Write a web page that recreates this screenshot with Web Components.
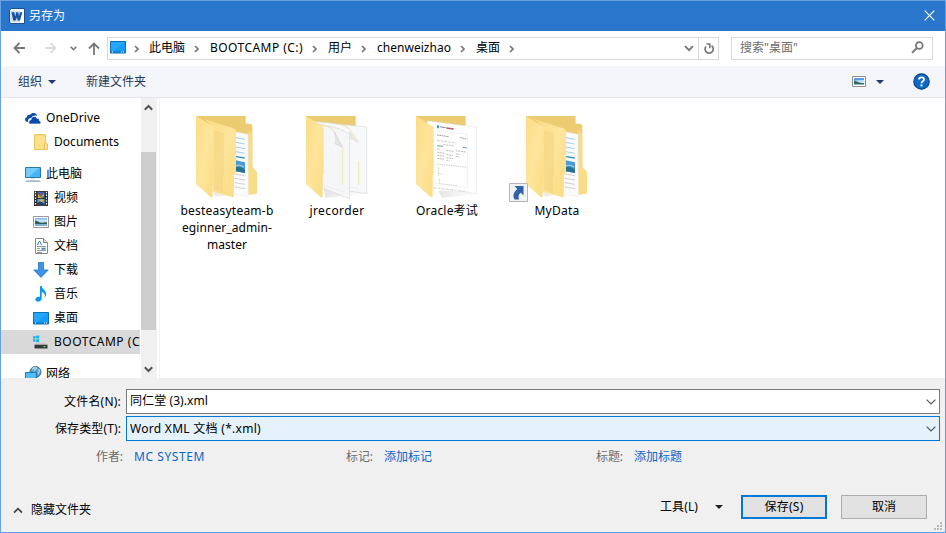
<!DOCTYPE html>
<html lang="zh-CN">
<head>
<meta charset="utf-8">
<title>另存为</title>
<style>
html,body{margin:0;height:100%;overflow:hidden}
body{font:12px/16px "Noto Sans","Noto Sans CJK SC",sans-serif;color:#000}
</style>
</head>
<body>
<save-dialog></save-dialog>
<script>
const ICONS = {
word:[16,16,`<path d="M.5 2 2.5.5h13v15H2L.5 14z" fill="#f2f7fd" stroke="#1d4e94"/><path d="M1.500 3h11v11h-11z" fill="#c5ddf4"/><path d="M11 2.500h3.500v12H11z" fill="#fff"/><path d="M2.500 4.300h2.800l.8 4.200 1.300-4.200h1.900l.7 4.200 1-4.200h2.300L11 12.500H8.700L8 9l-1.300 3.500H4.300z" fill="#174f9c"/>`],
close:[11,11,`<path d="M.7.7 10.3 10.3M10.3.7.7 10.3" stroke="#fff" stroke-width="1.2" fill="none"/>`],
back:[13,12,`<path d="M6.500 1 1.500 6l5 5M1.500 6H12" stroke="#777" stroke-width="1.8" fill="none"/>`],
forward:[13,12,`<path d="M6.500 1 11.500 6l-5 5M11.500 6H1" stroke="#dcdcdc" stroke-width="1.8" fill="none"/>`],
mini:[7,5,`<path d="M.7.8 3.500 3.600 6.300.8" stroke="#777" stroke-width="1.600" fill="none"/>`],
up:[12,13,`<path d="M1 6.500 6 1.500l5 5M6 2v11" stroke="#777" stroke-width="1.8" fill="none"/>`],
chev:[5,8,`<path d="M1 1l3 3-3 3" stroke="#777" stroke-width="1.700" fill="none"/>`],
down:[10,7,`<path d="M1 1.200 5 5.200 9 1.200" stroke="#777" stroke-width="1.9" fill="none"/>`],
combo:[10,6,`<path d="M.6.6 5 4.900 9.400.6" stroke="#555" stroke-width="1.2" fill="none"/>`],
refresh:[12,13,`<path d="M8.600 3.700A4.100 4.100 0 1 1 2.900 4.500" stroke="#777" stroke-width="1.700" fill="none"/><path d="M3.500 2h3.300v4.300" stroke="#777" stroke-width="1.600" fill="none"/>`],
search:[13,13,`<circle cx="8.300" cy="4.500" r="3.400" stroke="#777" stroke-width="1.800" fill="none"/><path d="M5.700 7.200 1 11.900" stroke="#777" stroke-width="2"/>`],
tri:[8,4,`<path d="M0 0h8L4 4z" fill="#1e3a66"/>`],
trib:[8,4,`<path d="M0 0h8L4 4z" fill="#222"/>`],
view:[14,11,`<path d="M.5.5h13v10H.5z" fill="#fff" stroke="#8c8c8c"/><path d="M2 2h10v3H2z" fill="#5b9ce8"/><path d="M2 4.500l10-.5v2H2z" fill="#bfe0f5"/><path d="M2 4.500c3 1 6 2.500 10 2.500v1H2z" fill="#2d6a62"/><path d="M2 8h10v1H2z" fill="#8bb8c8"/>`],
help:[17,17,`<circle cx="8.500" cy="8.500" r="7.700" fill="#0d6ac8" stroke="#0b4686" stroke-width="1.200"/><path d="M6 6.600C6 3.600 11 3.600 11 6.500c0 1.800-2.500 1.700-2.500 3.700" fill="none" stroke="#fff" stroke-width="1.900"/><path d="M7.500 11.400h2v2h-2z" fill="#fff"/>`],
screen:[16,13,`<path d="M.5.500h15v11.500H.5z" fill="#159cf7" stroke="#0b6fb5"/><path d="M1 1h14L4 10H1z" fill="#27a5fb"/><path d="M1 10.500h14v1H1z" fill="#0b74c0"/><path d="M2 10.500h1v1H2zM11 10.500h1v1h-1zM13 10.500h1v1h-1z" fill="#fff"/>`],
cloud:[16,11,`<path d="M3 9C-.8 8.700-.6 4.500 2 4.300 2 2 4 1.500 5 2 7-.8 11.500-.5 12 3 9.500 1.800 7 3 6.500 5 4 4.600 2.500 7 3 9z" fill="#0b4bab"/><path d="M5.500 11C3 11 3.200 7 6 6.800 6 3 11 2.200 12.200 5.500c2-.3 2.400 1 2.200 2.300C16.500 8 16.300 11 14.500 11z" fill="#0b4bab" stroke="#fff" stroke-width=".7"/>`],
minifolder:[14,16,`<path d="M.5.500h11v8.500l1.500 1.500v5H.5z" fill="#fde08a" stroke="#e9c465"/><path d="M10.500 15V10l1.500-1.500 1.500 1.500v5.500h-3z" fill="#fbe59c" stroke="#e3b94e" stroke-width=".8"/>`],
pc:[16,15,`<path d="M.5.500h15v10H.5z" fill="#43b5f7" stroke="#2c77a5"/><path d="M1 1h13L4 10H1z" fill="#74cbfb"/><path d="M6 11h4v1.500H6z" fill="#dfe6eb"/><path d="M1.500 13.300h13L16 15H0z" fill="#a9bccb"/>`],
video:[14,15,`<path d="M0 0h14v15H0z" fill="#303030"/><path d="M3.500.8h7v6.400h-7z" fill="#3562b8"/><path d="M3.500 8h7v6.200h-7z" fill="#5ba3ef"/><path d="M4 3l3 3 3-4v3L7 7H4z" fill="#d8a928"/><path d="M6 2h2v2H6z" fill="#d0402b"/><path d="M3.500 12l3-2 4 3v1.200h-7z" fill="#253f61"/><path d="M6 8.500h3v2H6z" fill="#e0b83b"/><path d="M1.500.8v14M12.500.8v14" stroke="#fff" stroke-width="1.200" stroke-dasharray="1.400 1.400"/>`],
picture:[16,12,`<path d="M.5.500h15v11H.5z" fill="#fff" stroke="#999"/><path d="M2 2h12v8H2z" fill="#c2e3fa"/><path d="M2 2h12v1.500H2z" fill="#84bbee"/><path d="M2 4.500c2 0 3 1 5 2 3 .500 5-.5 7 0V8H2z" fill="#2f5d58"/><path d="M2 8h12v2H2z" fill="#7cb2cd"/>`],
doc:[13,16,`<path d="M.5.500h8l4 4v11H.5z" fill="#fff" stroke="#888"/><path d="M8.500.5v4h4" fill="#ddd" stroke="#888"/><path d="M2.500 7 4 3.500h1L6.500 7" stroke="#347bc5" fill="none"/><path d="M2 8.500h9M2 12.500h9" stroke="#8a9aaa"/><path d="M2 10.500h3M2 14.500h5" stroke="#999"/><path d="M6.500 9.700h4v2h-4z" fill="#4688bd"/>`],
download:[16,16,`<path d="M5.500.500h5v7.500h4.700L8 15.400.8 8h4.700z" fill="#3d94e6" stroke="#2874ba" stroke-width=".8"/>`],
music:[12,16,`<path d="M5 0h1.700c.4 3.500 4.800 4.500 4.500 8.500-.1 1.500-1 2.500-1.700 3.200C10.500 8.500 9.500 7 6.700 6v6.800C6.500 15 4 16 2 15.500.5 15-.3 13 1 11.800 2.200 10.700 4 10.500 5 11z" fill="#0b98f2"/>`],
drive:[16,14,`<path d="M0 1.300l2.500-.3v2.500H0zM3.200.8 6.200.4v3.100h-3zM0 4.200h2.500v2.600L0 6.500zM3.200 4.200h3V7.300l-3-.4z" fill="#12b3e8"/><path d="M3.500 7.800h9l2 2H1.500z" fill="#c7c9ca"/><path d="M1.500 9.700h13v3.800h-13z" fill="#37393b"/><path d="M10.500 11h2v1.200h-2z" fill="#4de35a"/>`],
network:[17,16,`<circle cx="10.500" cy="6" r="5.500" fill="#579dc7" stroke="#39718f"/><path d="M7 3.500c1.500-2 3.500-2 4.500-1.300L9 5M13.500 3l1 2-1.500 3" fill="none" stroke="#a9d2e8" stroke-width="1.500"/><path d="M.5 6.500h11l-.5 8H.5z" fill="#54bdf5" stroke="#1b77b8"/>`],
sbup:[9,7,`<path d="M.8 5.700 4.500 2l3.700 3.700" stroke="#555" stroke-width="2" fill="none"/>`],
sbdn:[9,7,`<path d="M.8 1.300 4.500 5l3.700-3.700" stroke="#555" stroke-width="2" fill="none"/>`],
hide:[10,7,`<path d="M1 5.700 5 1.700l4 4" stroke="#444" stroke-width="1.800" fill="none"/>`],
shortcut:[19,19,`<path d="M.5.500h18v18H.5z" fill="#f1f2f4" stroke="#b4b4b4"/><path d="M5.500 3H14.500v9.500L11.800 9.800C9.300 11.500 9.300 13.500 10 16.500H5.500C3.500 12.500 4.500 9.500 8.300 6z" fill="#2f62a8"/>`],
grip:[9,9,`<path d="M6 0h2v2H6zM3 3h2v2H3zM6 3h2v2H6zM0 6h2v2H0zM3 6h2v2H3zM6 6h2v2H6z" fill="#b9b9b9"/>`]
};
/* Large folder drawings share one 240 x 270 coordinate space. */
const DEFS = `<defs><linearGradient id="f" x1="0" y1="0" x2="1" y2="1"><stop offset="0" stop-color="#fadc82"/><stop offset=".5" stop-color="#fee59c"/><stop offset="1" stop-color="#fadb80"/></linearGradient><linearGradient id="b" x2="0" y2="1"><stop stop-color="#ebca70"/><stop offset="1" stop-color="#f8dd8b"/></linearGradient><linearGradient id="s"><stop stop-color="#bbb" stop-opacity=".4"/><stop offset="1" stop-color="#ddd" stop-opacity="0"/></linearGradient></defs>`;
const BACK = `<path d="M78 33H224Q227 33 227 37V240H80z" fill="url(#b)"/>`;
const FRONT = `<path d="M78 33L128 64Q131 67 131 71V206L128 213V274Q126 279 121 275L81 240Q78 238 78 234z" fill="url(#f)"/>`;
const INNER = BACK+`<path d="M160 48L242 57Q247 58 247 63V186L261 202V261Q261 266 257 266L190 266z" fill="url(#b)"/><path d="M236 75L247 90V186L261 202V261Q261 266 257 266L236 270z" fill="#f9dc88"/><path d="M130 262l60 0-5 12h-50z" fill="url(#s)"/><path d="M195 80L235 88V275L190 268z" fill="#fafafa" stroke="#e2e2e2"/><g stroke="#4aa6d4" stroke-width="2"><path d="M198 98l26 5M198 112l26 5M198 126l26 5M198 140l26 5" opacity=".75"/><path d="M198 155l26 4" stroke="#2a93d0" stroke-width="4"/></g><path d="M197 166l28 6v32l-28-5z" fill="#4b9bd6"/><path d="M197 186q14-4 28 7v11l-28-5z" fill="#2b6f93"/><path d="M197 183q13-7 25 3" stroke="#a7d4e8" stroke-width="3" fill="none"/><path d="M194 207l31 5M194 220l31 5M194 233l31 5M194 246l31 5" stroke="#bbb" stroke-width="2"/><path d="M104 43L193 71Q198 73 198 78V203L191 211V272Q191 278 186 276L128 260V65z" fill="url(#f)"/><path d="M131 76l31 8v125l-3 7v48l-28-9z" fill="#ebcb70" opacity=".32"/>`+FRONT;
const FOLDERS = {
nested:INNER,
pages:BACK+`<path d="M130 250l100 0 52 10-25 8-120 10z" fill="url(#s)"/><path d="M84 47L260 66V266L140 248z" fill="#f7f8fa" stroke="#cfcfcf" stroke-width="1.500"/><path d="M168 57q34 2 43 20l24 32" fill="none" stroke="#f0dba2" stroke-width="2.500"/><path d="M208 80q5 14 1 20 14 3 24 13z" fill="#e7e8ea" stroke="#c5c5c5"/><path d="M100 52l80 20 29 16v194l-81-33z" fill="#f5f6f8" stroke="#cfcfcf" stroke-width="1.500"/><path d="M112 58q42 5 50 22l25 46" fill="none" stroke="#f0dba2" stroke-width="2.500"/><path d="M164 82q5 20 1 35 14 3 23 12z" fill="#e4e5e8" stroke="#c5c5c5"/><path d="M188 130v109M236 168v72" stroke="#f5dc9c" stroke-width="2"/><path d="M130 242l60 18M207 247l30 3" stroke="#ccc" stroke-dasharray="7 3"/>`+FRONT,
exam:BACK+`<path d="M145 257l135 2-20 9-105 10z" fill="url(#s)"/><path d="M112 47L260 67V266L112 244z" fill="#fff" stroke="#dadada" stroke-width="1.500"/><path d="M141 61h6v9h-6z" fill="#3aa1c5"/><path d="M149 65l18 3" stroke="#888" stroke-width="3"/><path d="M169 69l22 3" stroke="#c45757" stroke-width="4"/><path d="M141 90l36 5M210 98l22 4" stroke="#888" stroke-width="2.500" stroke-dasharray="5 2"/><path d="M141 107l31 3M175 111l24 3" stroke="#999" stroke-width="1.500" stroke-dasharray="8 3"/><path d="M141 122l18 2M218 127l12 2" stroke="#55a4c2" stroke-width="3"/><path d="M160 119l30 3M142 132l8 1M142 142l22 3M142 151l24 3M142 160l20 3M169 136l24 3M169 149l20 3M169 158l20 3M169 165l10 3M197 137l30 4M197 146l12 2M197 154l10 2" stroke="#999" stroke-width="2" stroke-dasharray="6 2"/><path d="M141 177l91 10M145 188v25M148 222v14l52 6M145 206l14 2" fill="none" stroke="#999" stroke-width="1.500" stroke-dasharray="4 3"/><path d="M139 77l93 11v160l-97-14" fill="none" stroke="#e3e3e3" stroke-width="1.500"/><path d="M130 249l65 7M205 257l28 3" stroke="#999" stroke-dasharray="8 5"/>`+FRONT
};
function define(name, html, css, init) {
  customElements.define(name, class extends HTMLElement {
    constructor() { super(); this.attachShadow({mode:'open'}); }
    connectedCallback() {
      if (this.shadowRoot.childNodes.length) return;
      this.shadowRoot.innerHTML = `<style>*{box-sizing:border-box}${css}</style>` + (typeof html === 'function' ? html(this) : html);
      if (init) init(this);
    }
  });
}
define('ui-icon', e => { const [w,h,p]=ICONS[e.getAttribute('name')]; return `<svg width="${w}" height="${h}" viewBox="0 0 ${w} ${h}">${p}</svg>`; },
  `:host{display:inline-flex;flex:none}svg{display:block}`);
/* Text tracked so that the run takes the width given in w. */
define('ui-text', e => `<span>${e.getAttribute('t')}</span>`,
  `:host{display:inline-block;flex:none;white-space:nowrap;height:16px;line-height:16px}span{display:inline-block;line-height:16px;height:16px}`,
  e => { const w=+e.getAttribute('w'), s=e.shadowRoot.querySelector('span'), n=[...e.getAttribute('t')].length;
    if (w) { s.style.letterSpacing=((w-s.getBoundingClientRect().width)/n)+'px'; e.style.width=w+'px'; } });
define('title-bar', `<ui-icon name="word"></ui-icon><ui-text t="另存为" w="36"></ui-text><ui-icon class="x" name="close"></ui-icon>`,
  `:host{display:flex;align-items:center;height:30px;background:#2a76cd;color:#fff;padding:0 10px 0 8px}ui-text{margin-left:4px}.x{margin-left:auto;margin-bottom:1px}`);
define('path-crumb', e => `<ui-text t="${e.getAttribute('t')}" w="${e.getAttribute('w')}"></ui-text><b><ui-icon name="chev"></ui-icon></b>`,
  `:host{display:flex;align-items:center}b{width:25px;display:flex;justify-content:center;padding-right:2px}ui-text{margin-bottom:2px}`);
define('address-bar', `<ui-icon name="screen"></ui-icon><b><ui-icon name="chev"></ui-icon></b>
 <path-crumb t="此电脑" w="36"></path-crumb><path-crumb t="BOOTCAMP (C:)" w="93"></path-crumb><path-crumb t="用户" w="24"></path-crumb><path-crumb t="chenweizhao" w="74"></path-crumb><path-crumb t="桌面" w="24"></path-crumb>
 <ui-icon class="d" name="down"></ui-icon><span><ui-icon name="refresh"></ui-icon></span>`,
  `:host{display:flex;align-items:center;width:612px;height:23px;border:1px solid #d9d9d9;padding-left:2px}:host>ui-icon:first-of-type{margin-bottom:2px}b{width:23px;display:flex;justify-content:center;padding-right:2px}.d{margin-left:auto;margin-right:4px}span{width:20px;height:21px;border-left:1px solid #d9d9d9;display:flex;align-items:center;justify-content:center}`);
define('search-box', `<ui-text t='搜索"桌面"' w="58"></ui-text><ui-icon name="search"></ui-icon>`,
  `:host{display:flex;align-items:center;justify-content:space-between;width:202px;height:23px;border:1px solid #d9d9d9;padding:0 8px 0 8px;color:#6d6d6d}ui-text,ui-icon{margin-bottom:2px}`);
define('nav-row', `<ui-icon name="back"></ui-icon><ui-icon name="forward"></ui-icon><ui-icon name="mini"></ui-icon><ui-icon name="up"></ui-icon><address-bar></address-bar><search-box></search-box>`,
  `:host{display:flex;align-items:center;height:35px;background:#fff;padding-left:12px}
  ui-icon:nth-of-type(2){margin-left:18px}ui-icon:nth-of-type(3){margin-left:13px}ui-icon:nth-of-type(4){margin-left:11px}address-bar{margin-left:7px}search-box{margin-left:12px}ui-icon{margin-bottom:1px}`);
define('tool-row', `<ui-text t="组织" w="24"></ui-text><ui-icon name="tri"></ui-icon><ui-text class="n" t="新建文件夹" w="60"></ui-text><ui-icon class="v" name="view"></ui-icon><ui-icon class="t" name="tri"></ui-icon><ui-icon class="h" name="help"></ui-icon>`,
  `:host{display:flex;align-items:center;height:32px;background:#f4f5f8;border-bottom:1px solid #e4e5e8;color:#1e395b;padding:0 15px 0 17px}ui-icon{margin-left:6px}.n{margin-left:30px}.v{margin-left:auto;margin-bottom:1px}.t{margin-left:10px}.h{margin-left:29px}`);
define('tree-item', e => `<i><ui-icon name="${e.getAttribute('icon')}"></ui-icon></i><ui-text t="${e.getAttribute('t')}" w="${e.getAttribute('w')}"></ui-text>`,
  `:host{display:flex;align-items:center;height:24px;padding-left:24px;overflow:hidden;flex:none}:host([sub]){padding-left:32px}:host([gap]){margin-top:8px}:host([sel]){background:#d9d9d9}i{flex:none;width:16px;display:flex;justify-content:center}ui-text{margin-left:5px}`);
define('nav-tree', `<tree-item icon="cloud" t="OneDrive" w="54"></tree-item><tree-item sub icon="minifolder" t="Documents" w="65"></tree-item><tree-item gap icon="pc" t="此电脑" w="36"></tree-item><tree-item sub icon="video" t="视频" w="24"></tree-item><tree-item sub icon="picture" t="图片" w="24"></tree-item><tree-item sub icon="doc" t="文档" w="24"></tree-item><tree-item sub icon="download" t="下载" w="24"></tree-item><tree-item sub icon="music" t="音乐" w="24"></tree-item><tree-item sub icon="screen" t="桌面" w="24"></tree-item><tree-item sub sel icon="drive" t="BOOTCAMP (C" w="86"></tree-item><tree-item gap icon="network" t="网络" w="24"></tree-item>`,
  `:host{display:flex;flex-direction:column;width:139px;height:280px;padding-top:8px;overflow:hidden}`);
define('scroll-bar', `<ui-icon name="sbup"></ui-icon><div></div><ui-icon name="sbdn"></ui-icon>`,
  `:host{display:flex;flex-direction:column;align-items:flex-start;width:16px;height:280px;background:#f0f0f0;margin-left:1px;padding:6px 0 5px}ui-icon{margin-left:3px}div{width:15px;height:178px;background:#cdcdcd;margin:41px 1px auto 0}`);
define('folder-item', e => `<div><svg width="80" height="90" viewBox="51 21 240 270">${DEFS+FOLDERS[e.getAttribute('kind')]}</svg>${e.hasAttribute('link')?'<ui-icon name="shortcut"></ui-icon>':''}</div>` + e.getAttribute('lines').split('|').map(l=>{const [t,w]=l.split('~');return `<ui-text t="${t}" w="${w}"></ui-text>`}).join(''),
  `:host{display:flex;flex-direction:column;align-items:center;width:110px}div{position:relative;height:91px}svg{display:block}ui-icon{position:absolute;left:-8px;top:71px}ui-text{margin-bottom:1px}`);
define('file-pane', `<folder-item kind="nested" lines="besteasyteam-b~93|eginner_admin-~90|master~40"></folder-item><folder-item kind="pages" lines="jrecorder~55"></folder-item><folder-item kind="exam" lines="Oracle考试~62"></folder-item><folder-item kind="nested" link lines="MyData~45"></folder-item>`,
  `:host{display:flex;flex:1;height:280px;margin-left:2px;border-left:1px solid #f2f2f2;padding:14px 0 0 12px}`);
define('combo-row', e => `<label><ui-text t="${e.getAttribute('label')}" w="${e.getAttribute('lw')}"></ui-text></label><div><ui-text t="${e.getAttribute('t')}" w="${e.getAttribute('w')}"></ui-text><ui-icon name="combo"></ui-icon></div>`,
  `:host{display:flex;align-items:center;height:25px;margin-bottom:2px}label{width:120px;display:flex;justify-content:flex-end;margin-right:5px}div{width:814px;height:25px;border:1px solid #7a7a7a;background:#fff;display:flex;align-items:center;justify-content:space-between;padding:0 3px}:host([active]) div{border-color:#0078d7;background:#e5f1fb}:host(:not([active])) div ui-text{margin-bottom:1px}`);
define('meta-field', e => `<ui-text t="${e.getAttribute('label')}" w="27"></ui-text><ui-text class="v" t="${e.getAttribute('t')}" w="${e.getAttribute('w')}"></ui-text>`,
  `:host{display:flex;width:250px;color:#6d6d6d}.v{color:#0a64cb;margin-left:11px}`);
define('push-button', e => `<ui-text t="${e.getAttribute('t')}" w="${e.getAttribute('w')}"></ui-text>`,
  `:host{box-sizing:border-box;display:flex;align-items:center;justify-content:center;width:86px;height:24px;border:1px solid #adadad;background:#e1e1e1}:host([primary]){border:2px solid #0078d7}`);
define('dialog-footer', `<combo-row label="文件名(N):" lw="57" t="同仁堂 (3).xml" w="78"></combo-row><combo-row active label="保存类型(T):" lw="66" t="Word XML 文档 (*.xml)" w="131"></combo-row>
 <div class="m"><meta-field label="作者:" t="MC SYSTEM" w="71"></meta-field><meta-field label="标记:" t="添加标记" w="48"></meta-field><meta-field label="标题:" t="添加标题" w="48"></meta-field></div>
 <div class="a"><ui-icon class="hi" name="hide"></ui-icon><ui-text class="ht" t="隐藏文件夹" w="60"></ui-text><ui-text class="tl" t="工具(L)" w="38"></ui-text><ui-icon class="tr" name="trib"></ui-icon><push-button primary t="保存(S)" w="39"></push-button><push-button t="取消" w="24"></push-button></div><ui-icon class="g" name="grip"></ui-icon>`,
  `:host{box-sizing:border-box;display:block;position:relative;height:154px;background:#f0f0f0;padding-top:11px}.m{display:flex;padding:6px 0 0 95px}.a{display:flex;align-items:center;height:24px;margin-top:30px;padding-left:12px}.ht{margin-left:8px}.hi,.ht{transform:translateY(3px)}.tl{margin-left:auto}.tr{margin:0 18px 0 17px}push-button{margin-right:14px}push-button:last-of-type{margin-right:18px}.g{position:absolute;right:2px;bottom:1px}`);
for (const [name, h] of [['address-bar'],['search-box'],['title-bar'],['nav-row'],['tool-row'],['tree-item'],['nav-tree'],['scroll-bar'],['file-pane']]) {
  document.head.appendChild(Object.assign(document.createElement('style'), {textContent: `${name}{box-sizing:border-box}`}));
}
define('save-dialog', `<title-bar></title-bar><nav-row></nav-row><tool-row></tool-row><main><nav-tree></nav-tree><scroll-bar></scroll-bar><file-pane></file-pane></main><dialog-footer></dialog-footer>`,
  `:host{display:block;box-sizing:border-box;width:946px;height:533px;border:1px solid #67a1e3;background:#fff;overflow:hidden}main{display:flex;height:280px}`);
</script>
</body>
</html>
